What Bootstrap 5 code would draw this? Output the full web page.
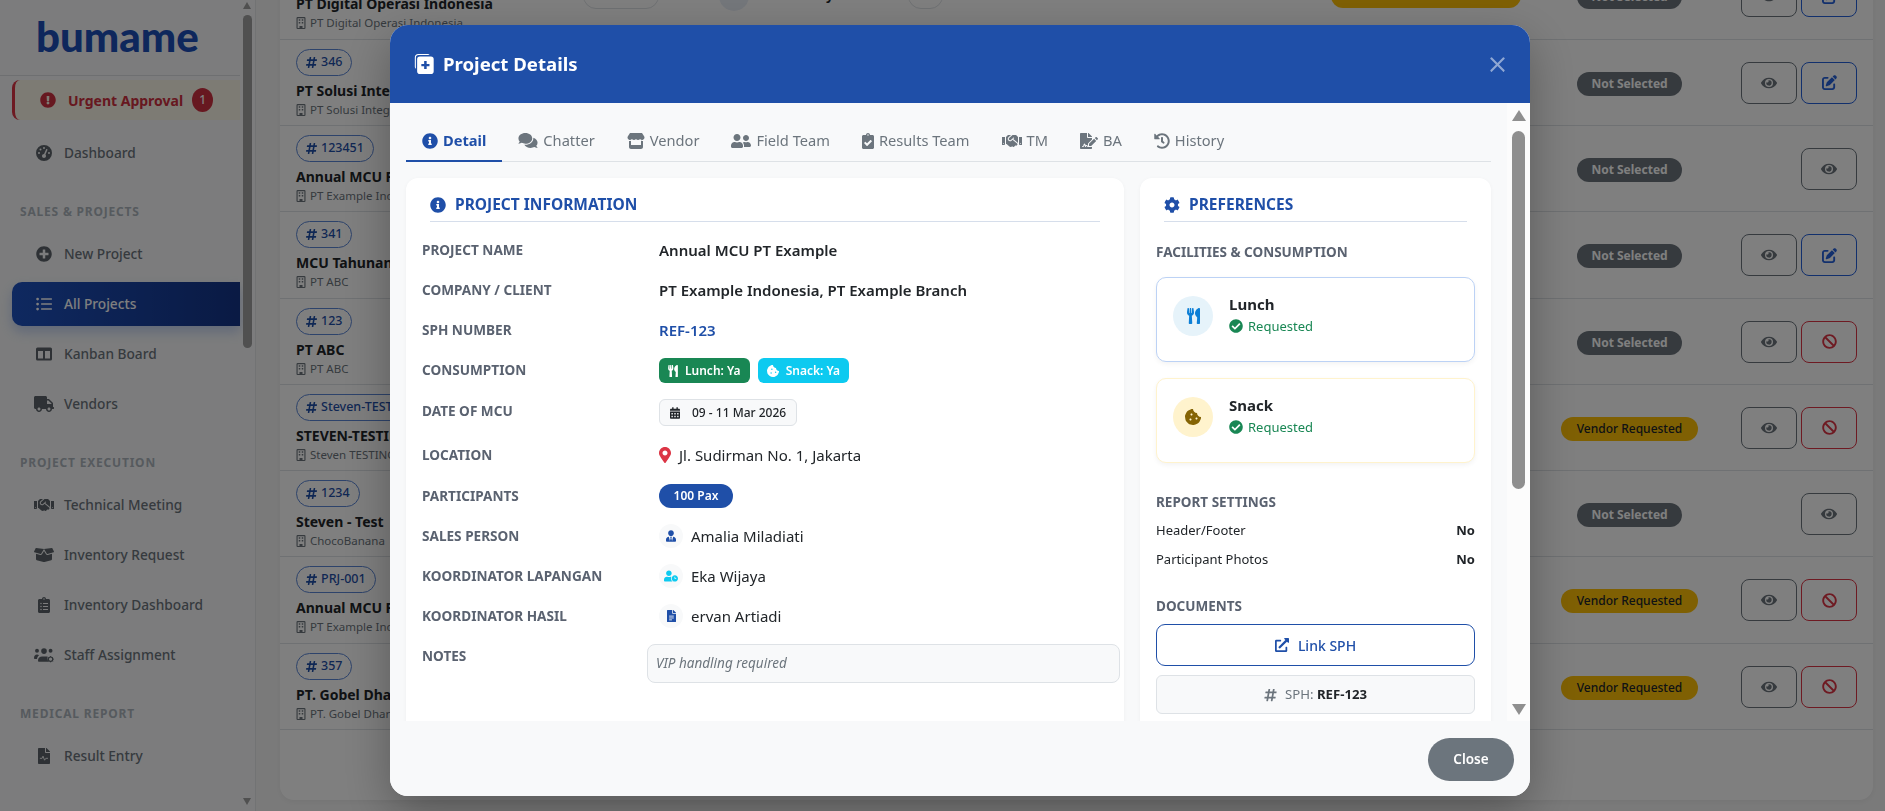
<!DOCTYPE html>
<html lang="en">
<head>
    <meta charset="UTF-8">
    <meta name="viewport" content="width=device-width, initial-scale=1.0">
    <title>All Projects</title>
    <link rel="stylesheet" href="https://cdn.jsdelivr.net/npm/bootstrap@5.3.0/dist/css/bootstrap.min.css">
    <style>
        :root { --blue: #1f4fa8; --side-text: #6c757d; }
        html, body { height: 100%; overflow: hidden; }
        body { font-family: "Noto Sans", "Liberation Sans", sans-serif; background: #f5f5f5; color: #212529; font-size: 15px; }
        svg.ic { fill: currentColor; display: block; flex: none; }

        /* sidebar */
        .side-wrap { width: 256px; flex: none; background: #f8f9fa; border-right: 1px solid #e4e6e8; }
        .side-col { width: 240px; flex: none; }
        .brand-box { height: 76px; border-bottom: 1px solid #dcdfe3; padding: 10px 0 0 36px; }
        .brand-word { font-family: Lato, Inter, sans-serif; font-weight: 900; font-size: 42px; line-height: 52px; color: #1c4fb8; }
        .urgent-item { height: 40px; margin: 4px 0 11px 12px; padding-left: 25px; border-left: 3px solid #dc3545; border-radius: 8px 0 0 8px; background: #faf6e8; color: #cf3040; font-weight: 700; font-size: 14px; gap: 12px; }
        .urgent-count { width: 21px; height: 24px; border-radius: 50%; background: #cf3040; color: #fff; font-size: 12px; font-weight: 500; margin-left: -3px; }
        .side-item { height: 44px; margin: 0 0 6px 12px; padding-left: 20px; gap: 8px; color: var(--side-text); font-weight: 500; font-size: 13.7px; text-decoration: none; }
        .side-item.on { background: linear-gradient(90deg, #1e52c0, #143488); color: #fff; border-radius: 10px 0 0 10px; box-shadow: 0 6px 12px rgba(36, 96, 218, .25); }
        .side-ico { width: 24px; display: flex; justify-content: center; color: #5c636a; }
        .on .side-ico { color: #fff; }
        .side-head { height: 18px; line-height: 18px; margin: 28px 0 11px 20px; font-size: 12px; font-weight: 700; letter-spacing: .8px; color: #adb5bd; text-transform: uppercase; }
        .side-rail { width: 15px; padding-left: 3px; }
        .rail-up { width: 0; height: 0; border-left: 4.5px solid transparent; border-right: 4.5px solid transparent; border-bottom: 7px solid #a0a0a0; margin: 2px 0 6px; }
        .rail-thumb { width: 9px; height: 333px; border-radius: 5px; background: #a0a0a0; }
        .rail-down { width: 0; height: 0; border-left: 4.5px solid transparent; border-right: 4.5px solid transparent; border-top: 7px solid #a0a0a0; margin-top: 450px; }

        /* page table */
        .page-pane { padding-left: 24px; padding-right: 12px; }
        .table-box { margin-top: -47px; height: 847px; background: #fff; border-radius: 14px; box-shadow: 0 2px 6px rgba(0, 0, 0, .05); overflow: hidden; }
        .job-table { table-layout: fixed; width: 1593px; }
        .job-table td { padding: 0; height: 86.25px; border-bottom: 1px solid #dee2e6; vertical-align: middle; background: transparent; }
        .job-table td.first { vertical-align: top; padding: 9px 0 0 16px; }
        .id-pill { height: 27px; padding: 0 9px; gap: 4px; border: 1px solid #5b86d6; border-radius: 14px; color: var(--blue); font-size: 12.5px; font-weight: 500; }
        .job-name { font-weight: 700; font-size: 14px; line-height: 20px; margin-top: 5px; white-space: nowrap; }
        .job-sub { font-size: 11.5px; line-height: 16px; margin-top: 1px; gap: 4px; color: #6c757d; white-space: nowrap; }
        .state-pill { height: 24px; border-radius: 12px; font-size: 12px; font-weight: 700; margin-top: 3px; }
        .state-none { width: 105px; background: #6c757d; color: #fff; }
        .state-vendor { width: 137px; background: #ffc107; color: #212529; font-weight: 500; }
        .state-manager { width: 190px; background: #ffc107; color: #212529; font-size: 11.5px; margin-top: 0; }
        .act-btn { width: 56px; height: 42px; margin-top: 1px; border: 1px solid #6c757d; border-radius: 8px; background: none; color: #6c757d; padding: 0; display: flex; align-items: center; justify-content: center; }
        .act-edit { border-color: #2460da; color: #2460da; }
        .act-stop { border-color: #dc3545; color: #dc3545; }
        .top-chip { height: 26px; border: 1px solid #dee2e6; border-radius: 13px; font-size: 12px; font-weight: 600; gap: 4px; }
        .top-avatar { width: 30px; height: 30px; border-radius: 50%; background: #e9eef7; }

        /* modal */
        .detail-dialog { max-width: none; width: 1140px; height: 771px; margin: 25px 0 0 390px; }
        .detail-content { height: 771px; border: 0; border-radius: 18px; overflow: hidden; background: #f8f9fa; box-shadow: 0 16px 48px rgba(0, 0, 0, .3); }
        .detail-head { height: 78px; flex: none; background: var(--blue); color: #fff; padding: 0 24px; border: 0; border-radius: 0; }
        .detail-title { font-size: 18.6px; font-weight: 700; gap: 9px; line-height: 24px; margin-top: -1px; }
        .detail-head .btn-close { margin: 0 0 0 auto; padding: 0; width: 17px; height: 17px; background-size: 17px; }
        .detail-body { padding: 0; overflow: hidden; min-height: 0; }
        .detail-main { padding: 16px; min-width: 0; }
        .modal-rail { width: 23px; flex: none; background: #fcfcfc; padding: 7px 0 0 5px; }
        .mr-up { width: 0; height: 0; border-left: 7px solid transparent; border-right: 7px solid transparent; border-bottom: 11px solid #8f8f8f; }
        .mr-thumb { width: 13px; height: 358px; border-radius: 7px; background: #8f8f8f; margin-top: 10px; }
        .mr-down { width: 0; height: 0; border-left: 7px solid transparent; border-right: 7px solid transparent; border-top: 11px solid #8f8f8f; margin-top: 215px; }

        .info-tabs { border-bottom: 1px solid #dee2e6; flex-wrap: nowrap; }
        .info-tabs .nav-link { padding: 10px 16px 8px; line-height: 23px; font-size: 14.65px; color: #6c757d; border: 0; border-bottom: 2px solid transparent; background: none; margin-bottom: -1px; gap: 5px; border-radius: 0; }
        .info-tabs .nav-link.active { color: var(--blue); font-weight: 700; border-bottom-color: var(--blue); background: none; }

        .sheet { background: #fff; border-radius: 12px; box-shadow: 0 1px 4px rgba(0, 0, 0, .04); height: 600px; }
        .sheet-left { padding: 15px 3px 0 4px; }
        .sheet-right { padding: 15px 16px 0; }
        .sheet-head { height: 29px; border-bottom: 1px solid #d6deeb; color: var(--blue); font-size: 15.5px; font-weight: 700; gap: 9px; padding-bottom: 5px; text-transform: uppercase; }
        .sheet-left .sheet-head { margin: 0 21px 16px 20px; }
        .sheet-right .sheet-head { margin: 0 8px 20px; }
        .field-row { display: flex; margin-bottom: 16px; }
        .field-row.tall { margin-bottom: 17px; }
        .field-label { width: 237px; flex: none; padding: 1px 0 0 12px; font-size: 13.6px; line-height: 21px; font-weight: 700; color: #5a6270; text-transform: uppercase; }
        .field-value { flex: 1; padding-left: 12px; font-size: 15px; line-height: 24px; min-width: 0; }
        .strong-val { font-weight: 600; }
        .blue-val { color: var(--blue); }
        .chip { height: 25px; border-radius: 6px; padding: 0 9px; font-size: 12px; font-weight: 600; color: #fff; gap: 7px; }
        .chip-snack { background: #0dcaf0; }
        .date-chip { height: 27px; border: 1px solid #dee2e6; border-radius: 6px; background: #f8f9fa; padding: 0 10px; font-size: 12px; font-weight: 500; gap: 12px; }
        .pax-pill { width: 74px; height: 24px; border-radius: 12px; background: var(--blue); color: #fff; font-size: 12px; font-weight: 600; }
        .who-ico { width: 24px; height: 24px; border-radius: 50%; background: #f8f9fa; margin-right: 8px; color: var(--blue); }
        .who-cyan { color: #0dcaf0; }
        .note-box { width: 473px; height: 39px; border: 1px solid #dee2e6; border-radius: 8px; background: #f8f9fa; padding-left: 8px; font-size: 13.5px; font-style: italic; color: #6c757d; display: flex; align-items: center; }
        .sub-head { font-size: 13.5px; font-weight: 700; line-height: 20px; color: #5a6270; text-transform: uppercase; }
        .sub-docs { margin-top: 27px; }
        .pref-box { height: 85px; border-radius: 10px; background: #fff; padding: 18px 16px; gap: 16px; box-shadow: 0 2px 5px rgba(0, 0, 0, .05); }
        .pref-blue { border: 1px solid #bcd2f5; margin: 15px 0 16px; }
        .pref-yellow { border: 1px solid #fff3cd; margin-bottom: 29px; }
        .pref-round { width: 40px; height: 40px; border-radius: 50%; flex: none; }
        .round-blue { background: #e6f3fa; color: #0d7fd6; }
        .round-yellow { background: #fff3cd; color: #856404; }
        .pref-name { font-size: 15px; font-weight: 700; line-height: 22px; margin-top: -3px; }
        .pref-state { font-size: 13px; line-height: 20px; color: #198754; gap: 5px; margin-top: 1px; }
        .set-row { font-size: 13px; line-height: 20px; margin-top: 9px; }
        .set-row.first { margin-top: 8px; }
        .doc-link { height: 42px; border: 1.5px solid var(--blue); border-radius: 9px; color: var(--blue); font-size: 14px; font-weight: 500; margin-top: 8px; gap: 9px; background: #fff; }
        .doc-code { height: 39px; border: 1px solid #dee2e6; border-radius: 6px; background: #f8f9fa; font-size: 13.2px; margin-top: 9px; gap: 8px; color: #6c757d; }
        .doc-code b { color: #212529; }
        .detail-foot { height: 75px; flex: none; background: #f8f9fa; padding: 0 16px 0 0; border: 0; border-radius: 0; justify-content: flex-end; align-items: flex-start; }
        .close-pill { width: 86px; height: 43px; margin: 17px 0 0; border-radius: 22px; border: 0; background: #6c757d; color: #fff; font-size: 13.5px; font-weight: 600; padding: 0; }
    </style>
</head>
<body class="d-flex">
    <svg width="0" height="0" class="position-absolute">
        <symbol id="i-info" viewBox="0 0 512 512"><path d="M256 8C119.043 8 8 119.083 8 256c0 136.997 111.043 248 248 248s248-111.003 248-248C504 119.083 392.957 8 256 8zm0 110c23.196 0 42 18.804 42 42s-18.804 42-42 42-42-18.804-42-42 18.804-42 42-42zm56 254c0 6.627-5.373 12-12 12h-88c-6.627 0-12-5.373-12-12v-24c0-6.627 5.373-12 12-12h12v-64h-12c-6.627 0-12-5.373-12-12v-24c0-6.627 5.373-12 12-12h64c6.627 0 12 5.373 12 12v100h12c6.627 0 12 5.373 12 12v24z"/></symbol>
        <symbol id="i-check" viewBox="0 0 512 512"><path d="M504 256c0 136.967-111.033 248-248 248S8 392.967 8 256 119.033 8 256 8s248 111.033 248 248zM227.314 387.314l184-184c6.248-6.248 6.248-16.379 0-22.627l-22.627-22.627c-6.248-6.249-16.379-6.249-22.628 0L216 308.118l-70.059-70.059c-6.248-6.248-16.379-6.248-22.628 0l-22.627 22.627c-6.248 6.248-6.248 16.379 0 22.627l104 104c6.249 6.249 16.379 6.249 22.628.001z"/></symbol>
        <symbol id="i-plus" viewBox="0 0 512 512"><path d="M256 8C119 8 8 119 8 256s111 248 248 248 248-111 248-248S393 8 256 8zm144 276c0 6.6-5.4 12-12 12h-92v92c0 6.6-5.4 12-12 12h-56c-6.6 0-12-5.4-12-12v-92h-92c-6.6 0-12-5.4-12-12v-56c0-6.6 5.4-12 12-12h92v-92c0-6.6 5.4-12 12-12h56c6.6 0 12 5.4 12 12v92h92c6.6 0 12 5.4 12 12v56z"/></symbol>
        <symbol id="i-alert" viewBox="0 0 512 512"><path d="M504 256c0 136.997-111.043 248-248 248S8 392.997 8 256C8 119.083 119.043 8 256 8s248 111.083 248 248zm-248 50c-25.405 0-46 20.595-46 46s20.595 46 46 46 46-20.595 46-46-20.595-46-46-46zm-43.673-165.346l7.418 136c.347 6.364 5.609 11.346 11.982 11.346h48.546c6.373 0 11.635-4.982 11.982-11.346l7.418-136c.375-6.874-5.098-12.654-11.982-12.654h-63.383c-6.884 0-12.356 5.78-11.981 12.654z"/></symbol>
        <symbol id="i-eye" viewBox="0 0 576 512"><path d="M572.52 241.4C518.29 135.59 410.93 64 288 64S57.68 135.64 3.48 241.41a32.35 32.35 0 0 0 0 29.19C57.71 376.41 165.07 448 288 448s230.32-71.64 284.52-177.41a32.35 32.35 0 0 0 0-29.19zM288 400a144 144 0 1 1 144-144 143.93 143.93 0 0 1-144 144zm0-240a95.31 95.31 0 0 0-25.31 3.79 47.85 47.85 0 0 1-66.9 66.9A95.78 95.78 0 1 0 288 160z"/></symbol>
        <symbol id="i-ban" viewBox="0 0 512 512"><path d="M256 8C119.034 8 8 119.033 8 256s111.034 248 248 248 248-111.034 248-248S392.967 8 256 8zm130.108 117.892c65.448 65.448 70 165.481 20.677 235.637L150.47 105.216c70.204-49.356 170.226-44.735 235.638 20.676zM125.892 386.108c-65.448-65.448-70-165.481-20.677-235.637L361.53 406.784c-70.203 49.356-170.226 44.736-235.638-20.676z"/></symbol>
        <symbol id="i-edit" viewBox="0 0 512 512"><path d="M471.6 21.7c-21.9-21.9-57.3-21.9-79.2 0L362.3 51.7l97.9 97.9 30.1-30.1c21.9-21.9 21.9-57.3 0-79.2L471.6 21.7zm-299.2 220c-6.1 6.1-10.8 13.6-13.5 21.9l-29.6 88.8c-2.9 8.6-.6 18.1 5.8 24.6s15.9 8.7 24.6 5.8l88.8-29.6c8.2-2.7 15.7-7.4 21.9-13.5L437.7 172.3 339.7 74.3 172.4 241.7zM96 64C43 64 0 107 0 160V416c0 53 43 96 96 96H352c53 0 96-43 96-96V320c0-17.7-14.3-32-32-32s-32 14.3-32 32v96c0 17.7-14.3 32-32 32H96c-17.7 0-32-14.3-32-32V160c0-17.7 14.3-32 32-32h96c17.7 0 32-14.3 32-32s-14.3-32-32-32H96z"/></symbol>
        <symbol id="i-food" viewBox="0 0 416 512"><path d="M207.9 15.2c.8 4.7 16.1 94.5 16.1 128.8 0 52.3-27.8 89.6-68.9 104.6L168 486.7c.7 13.7-10.2 25.3-24 25.3H80c-13.7 0-24.7-11.5-24-25.3l12.9-238.1C27.7 233.6 0 196.2 0 144 0 109.6 15.3 19.9 16.1 15.2 19.3-5.1 61.4-5.4 64 16.3v141.2c1.3 3.4 15.1 3.2 16 0 1.4-25.3 7.9-139.2 8-141.8 3.3-20.8 44.7-20.8 47.9 0 .2 2.7 6.6 116.5 8 141.8.9 3.2 14.8 3.4 16 0V16.3c2.6-21.6 44.8-21.4 48-1.1zm119.2 285.7l-15 185.1c-1.2 14 9.9 26 23.9 26h56c13.3 0 24-10.7 24-24V24c0-13.2-10.7-24-24-24-82.5 0-221.4 178.5-64.9 300.9z"/></symbol>
        <symbol id="i-history" viewBox="0 0 512 512"><path d="M504 255.531c.253 136.64-111.18 248.372-247.82 248.468-59.015.042-113.223-20.53-155.822-54.911-11.077-8.94-11.905-25.541-1.839-35.607l11.267-11.267c8.609-8.609 22.353-9.551 31.891-1.984C173.062 425.135 212.781 440 256 440c101.705 0 184-82.311 184-184 0-101.705-82.311-184-184-184-48.814 0-93.149 18.969-126.068 49.932l50.754 50.754c10.08 10.08 2.941 27.314-11.313 27.314H24c-8.837 0-16-7.163-16-16V38.627c0-14.254 17.234-21.393 27.314-11.314l49.372 49.372C129.209 34.136 189.552 8 256 8c136.81 0 247.747 110.78 248 247.531zm-180.912 78.784l9.823-12.63c8.138-10.463 6.253-25.542-4.21-33.679L288 256.349V152c0-13.255-10.745-24-24-24h-16c-13.255 0-24 10.745-24 24v135.651l65.409 50.874c10.463 8.137 25.541 6.253 33.679-4.21z"/></symbol>
        <symbol id="i-gear" viewBox="0 0 512 512"><path d="M487.4 315.7l-42.6-24.6c4.3-23.2 4.3-47 0-70.2l42.6-24.6c4.9-2.8 7.1-8.6 5.5-14-11.1-35.6-30-67.8-54.7-94.6-3.8-4.1-10-5.1-14.8-2.3L380.8 110c-17.9-15.4-38.5-27.3-60.8-35.1V25.8c0-5.6-3.9-10.5-9.4-11.7-36.7-8.2-74.3-7.8-109.2 0-5.5 1.2-9.4 6.1-9.4 11.7V75c-22.2 7.9-42.8 19.8-60.8 35.1L88.7 85.5c-4.9-2.8-11-1.9-14.8 2.3-24.7 26.7-43.6 58.9-54.7 94.6-1.7 5.4.6 11.2 5.5 14L67.3 221c-4.3 23.2-4.3 47 0 70.2l-42.6 24.6c-4.9 2.8-7.1 8.6-5.5 14 11.1 35.6 30 67.8 54.7 94.6 3.8 4.1 10 5.1 14.8 2.3l42.6-24.6c17.9 15.4 38.5 27.3 60.8 35.1v49.2c0 5.6 3.9 10.5 9.4 11.7 36.7 8.2 74.3 7.8 109.2 0 5.5-1.2 9.4-6.1 9.4-11.7v-49.2c22.2-7.9 42.8-19.8 60.8-35.1l42.6 24.6c4.9 2.8 11 1.9 14.8-2.3 24.7-26.7 43.6-58.9 54.7-94.6 1.5-5.5-.7-11.3-5.6-14.1zM256 336c-44.1 0-80-35.9-80-80s35.9-80 80-80 80 35.9 80 80-35.9 80-80 80z"/></symbol>
        <symbol id="i-comments" viewBox="0 0 576 512"><path d="M416 192c0-88.4-93.1-160-208-160S0 103.6 0 192c0 34.3 14.1 65.9 38 92-13.4 30.2-35.5 54.2-35.8 54.5-2.2 2.3-2.8 5.7-1.5 8.7S4.8 352 8 352c36.6 0 66.9-12.3 88.7-25 32.2 15.7 70.3 25 111.3 25 114.9 0 208-71.6 208-160zm122 220c23.9-26 38-57.7 38-92 0-66.9-53.5-124.2-129.3-148.1.9 6.6 1.3 13.3 1.3 20.1 0 105.9-107.7 192-240 192-10.8 0-21.3-.8-31.7-1.9C207.8 439.6 281.8 480 368 480c41 0 79.1-9.2 111.3-25 21.8 12.7 52.1 25 88.7 25 3.2 0 6.1-1.9 7.3-4.8 1.3-2.9.7-6.3-1.5-8.7-.3-.3-22.4-24.2-35.8-54.5z"/></symbol>
        <symbol id="i-friends" viewBox="0 0 640 512"><path d="M192 256c61.9 0 112-50.1 112-112S253.9 32 192 32 80 82.1 80 144s50.1 112 112 112zm76.8 32h-8.3c-20.8 10-43.9 16-68.5 16s-47.6-6-68.5-16h-8.3C51.6 288 0 339.6 0 403.2V432c0 26.5 21.5 48 48 48h288c26.5 0 48-21.5 48-48v-28.8c0-63.6-51.6-115.2-115.2-115.2zM480 256c53 0 96-43 96-96s-43-96-96-96-96 43-96 96 43 96 96 96zm48 32h-3.8c-13.9 4.8-28.6 8-44.2 8s-30.3-3.2-44.2-8H432c-20.4 0-39.2 5.9-55.7 15.4 24.4 26.3 39.7 61.2 39.7 99.8v38.4c0 2.2-.5 4.3-.6 6.4H592c26.5 0 48-21.5 48-48 0-61.9-50.1-112-112-112z"/></symbol>
        <symbol id="i-clipcheck" viewBox="0 0 384 512"><path d="M336 64h-80c0-35.3-28.7-64-64-64s-64 28.7-64 64H48C21.5 64 0 85.5 0 112v352c0 26.5 21.5 48 48 48h288c26.5 0 48-21.5 48-48V112c0-26.5-21.5-48-48-48zM192 40c13.3 0 24 10.7 24 24s-10.7 24-24 24-24-10.7-24-24 10.7-24 24-24zm121.2 231.8l-143 141.8c-4.7 4.7-12.3 4.6-17-.1l-82.6-83.3c-4.7-4.7-4.6-12.3.1-17L99.1 285c4.7-4.7 12.3-4.6 17 .1l46 46.4 106-105.2c4.7-4.7 12.3-4.6 17 .1l28.2 28.4c4.7 4.8 4.6 12.3-.1 17z"/></symbol>
        <symbol id="i-cliplist" viewBox="0 0 384 512"><path d="M336 64h-80c0-35.3-28.7-64-64-64s-64 28.7-64 64H48C21.5 64 0 85.5 0 112v352c0 26.5 21.5 48 48 48h288c26.5 0 48-21.5 48-48V112c0-26.5-21.5-48-48-48zM96 424c-13.3 0-24-10.7-24-24s10.7-24 24-24 24 10.7 24 24-10.7 24-24 24zm0-96c-13.3 0-24-10.7-24-24s10.7-24 24-24 24 10.7 24 24-10.7 24-24 24zm0-96c-13.3 0-24-10.7-24-24s10.7-24 24-24 24 10.7 24 24-10.7 24-24 24zm96-192c13.3 0 24 10.7 24 24s-10.7 24-24 24-24-10.7-24-24 10.7-24 24-24zm128 368c0 4.4-3.6 8-8 8H168c-4.4 0-8-3.6-8-8v-16c0-4.4 3.6-8 8-8h144c4.4 0 8 3.6 8 8v16zm0-96c0 4.4-3.6 8-8 8H168c-4.4 0-8-3.6-8-8v-16c0-4.4 3.6-8 8-8h144c4.4 0 8 3.6 8 8v16zm0-96c0 4.4-3.6 8-8 8H168c-4.4 0-8-3.6-8-8v-16c0-4.4 3.6-8 8-8h144c4.4 0 8 3.6 8 8v16z"/></symbol>
        <symbol id="i-pin" viewBox="0 0 384 512"><path d="M172.268 501.67C26.97 291.031 0 256.409 0 192.001 0 85.961 85.961 0 192 0s192 85.961 192 192c0 64.408-26.97 99.03-172.268 309.67-9.535 13.774-29.93 13.773-39.464 0zM192 272c44.183 0 80-35.817 80-80s-35.817-80-80-80-80 35.817-80 80 35.817 80 80 80z"/></symbol>
        <symbol id="i-cal" viewBox="0 0 448 512"><path d="M0 464c0 26.5 21.5 48 48 48h352c26.5 0 48-21.5 48-48V192H0v272zm320-196c0-6.6 5.4-12 12-12h40c6.6 0 12 5.4 12 12v40c0 6.6-5.4 12-12 12h-40c-6.6 0-12-5.4-12-12v-40zm0 128c0-6.6 5.4-12 12-12h40c6.6 0 12 5.4 12 12v40c0 6.6-5.4 12-12 12h-40c-6.6 0-12-5.4-12-12v-40zM192 268c0-6.6 5.4-12 12-12h40c6.6 0 12 5.4 12 12v40c0 6.6-5.4 12-12 12h-40c-6.6 0-12-5.4-12-12v-40zm0 128c0-6.6 5.4-12 12-12h40c6.6 0 12 5.4 12 12v40c0 6.6-5.4 12-12 12h-40c-6.6 0-12-5.4-12-12v-40zM64 268c0-6.6 5.4-12 12-12h40c6.6 0 12 5.4 12 12v40c0 6.6-5.4 12-12 12H76c-6.6 0-12-5.4-12-12v-40zm0 128c0-6.6 5.4-12 12-12h40c6.6 0 12 5.4 12 12v40c0 6.6-5.4 12-12 12H76c-6.6 0-12-5.4-12-12v-40zM400 64h-48V16c0-8.8-7.2-16-16-16h-32c-8.8 0-16 7.2-16 16v48H160V16c0-8.8-7.2-16-16-16h-32c-8.8 0-16 7.2-16 16v48H48C21.5 64 0 85.5 0 112v48h448v-48c0-26.5-21.5-48-48-48z"/></symbol>
        <symbol id="i-hash" viewBox="0 0 448 512"><path d="M440.667 182.109l7.143-40c1.313-7.355-4.342-14.109-11.813-14.109h-74.81l14.623-81.891C377.123 38.754 371.468 32 363.997 32h-40.632a12 12 0 0 0-11.813 9.891L296.175 128H197.54l14.623-81.891C213.477 38.754 207.822 32 200.35 32h-40.632a12 12 0 0 0-11.813 9.891L132.528 128H53.432a12 12 0 0 0-11.813 9.891l-7.143 40C33.163 185.246 38.818 192 46.289 192h74.81L98.242 320H19.146a12 12 0 0 0-11.813 9.891l-7.143 40C-1.123 377.246 4.532 384 12.003 384h74.81L72.19 465.891C70.877 473.246 76.532 480 84.003 480h40.632a12 12 0 0 0 11.813-9.891L151.826 384h98.634l-14.623 81.891C234.523 473.246 240.178 480 247.65 480h40.632a12 12 0 0 0 11.813-9.891L315.472 384h79.096a12 12 0 0 0 11.813-9.891l7.143-40c1.313-7.355-4.342-14.109-11.813-14.109h-74.81l22.857-128h79.096a12 12 0 0 0 11.813-9.891zM261.889 320h-98.634l22.857-128h98.634l-22.857 128z"/></symbol>
        <symbol id="i-extern" viewBox="0 0 512 512"><path d="M432,320H400a16,16,0,0,0-16,16V448H64V128H208a16,16,0,0,0,16-16V80a16,16,0,0,0-16-16H48A48,48,0,0,0,0,112V464a48,48,0,0,0,48,48H400a48,48,0,0,0,48-48V336A16,16,0,0,0,432,320ZM488,0h-128c-21.37,0-32.05,25.91-17,41l35.73,35.73L135,320.37a24,24,0,0,0,0,34L157.67,377a24,24,0,0,0,34,0L435.28,133.32,471,169c15,15,41,4.5,41-17V24A24,24,0,0,0,488,0Z"/></symbol>
        <symbol id="i-store" viewBox="0 0 576 512"><path d="M547.6 103.8L490.3 13.1C485.2 5 476.1 0 466.4 0H109.6C99.9 0 90.8 5 85.7 13.1L28.3 103.8c-29.6 46.8-3.4 111.9 51.9 119.4c4 .5 8.1 .8 12.1 .8c26.1 0 49.3-11.4 65.2-29c15.9 17.6 39.1 29 65.2 29c26.1 0 49.3-11.4 65.2-29c15.9 17.6 39.1 29 65.2 29c26.2 0 49.3-11.4 65.2-29c16 17.6 39.1 29 65.2 29c4.1 0 8.1-.3 12.1-.8c55.5-7.4 81.8-72.5 52.1-119.4zM499.7 254.9l-.1 0c-5.3 .7-10.7 1.1-16.2 1.1c-12.4 0-24.3-1.9-35.4-5.3V384H128V250.6c-11.2 3.5-23.2 5.4-35.6 5.4c-5.5 0-11-.4-16.3-1.1l-.1 0c-4.1-.6-8.1-1.3-12-2.3V384v64c0 35.3 28.7 64 64 64H448c35.3 0 64-28.7 64-64V384 252.6c-4 1-8 1.8-12.3 2.3z"/></symbol>
        <symbol id="i-shake" viewBox="0 0 640 512"><path d="M434.7 64h-85.9c-8 0-15.7 3-21.6 8.4l-98.3 90c-.1.1-.2.3-.3.4-16.6 15.6-16.3 40.5-2.1 56 12.7 13.9 39.4 17.6 56.1 2.7.1-.1.3-.1.4-.2l79.9-73.2c6.5-5.9 16.7-5.5 22.6 1 6 6.5 5.5 16.6-1 22.6l-26.1 23.9L504 313.8c2.9 2.4 5.5 5 7.9 7.7V128l-54.6-54.6c-5.9-6-14.1-9.4-22.6-9.4zM544 128.2v223.9c0 17.7 14.3 32 32 32h64V128.2h-96zm48 223.9c-8.8 0-16-7.2-16-16s7.2-16 16-16 16 7.2 16 16-7.2 16-16 16zM0 384h64c17.7 0 32-14.3 32-32V128.2H0V384zm48-63.9c8.8 0 16 7.2 16 16s-7.2 16-16 16-16-7.2-16-16c0-8.9 7.2-16 16-16zm435.9 18.6L334.6 217.5l-30 27.5c-29.7 27.1-75.2 24.5-101.7-4.4-26.9-29.4-24.8-74.9 4.4-101.7L289.1 64h-83.8c-8.5 0-16.6 3.4-22.6 9.4L128 128v223.9h18.3l90.5 81.9c27.4 22.3 67.7 18.1 90-9.3l.2-.2 17.9 15.5c15.9 13 39.4 10.5 52.3-5.4l31.4-38.6 5.4 4.4c13.7 11.1 33.9 9.1 45-4.7l9.5-11.7c11.2-13.8 9.1-33.9-4.6-45.1z"/></symbol>
        <symbol id="i-sign" viewBox="0 0 576 512"><path d="M218.17 424.14c-2.95-5.92-8.09-6.52-10.17-6.52s-7.22.59-10.02 6.19l-7.67 15.34c-6.37 12.78-25.03 11.37-29.48-2.09L144 386.59l-10.61 31.88c-5.89 17.66-22.38 29.53-41 29.53H80c-8.84 0-16-7.16-16-16s7.16-16 16-16h12.39c4.83 0 9.11-3.08 10.64-7.66l18.19-54.64c3.3-9.81 12.44-16.41 22.78-16.41s19.48 6.59 22.77 16.41l13.88 41.64c19.75-16.19 54.06-9.7 66 14.16 1.89 3.78 5.49 5.95 9.36 6.26v-82.12l128-127.09V160H248c-13.2 0-24-10.8-24-24V0H24C10.7 0 0 10.7 0 24v464c0 13.3 10.7 24 24 24h336c13.3 0 24-10.7 24-24v-40l-128-.11c-16.12-.31-30.58-9.28-37.83-23.75zM384 121.9c0-6.3-2.5-12.4-7-16.9L279.1 7c-4.5-4.5-10.6-7-17-7H256v128h128v-6.1zm-96 225.06V416h68.99l161.68-162.78-67.88-67.88L288 346.96zm280.54-179.63l-31.87-31.87c-9.94-9.94-26.07-9.94-36.01 0l-27.25 27.25 67.88 67.88 27.25-27.25c9.95-9.94 9.95-26.07 0-36.01z"/></symbol>
        <symbol id="i-gauge" viewBox="0 0 512 512"><path d="M0 256a256 256 0 1 1 512 0A256 256 0 1 1 0 256zM288 96a32 32 0 1 0 -64 0 32 32 0 1 0 64 0zM256 416c35.3 0 64-28.7 64-64c0-17.4-6.9-33.1-18.1-44.6L366 161.7c5.3-12.1-.2-26.3-12.3-31.6s-26.3 .2-31.6 12.3L257.9 288c-.6 0-1.3 0-1.9 0c-35.3 0-64 28.7-64 64s28.7 64 64 64zM176 144a32 32 0 1 0 -64 0 32 32 0 1 0 64 0zM96 288a32 32 0 1 0 0-64 32 32 0 1 0 0 64zm352-32a32 32 0 1 0 -64 0 32 32 0 1 0 64 0z"/></symbol>
        <symbol id="i-truck" viewBox="0 0 640 512"><path d="M624 352h-16V243.9c0-12.7-5.1-24.9-14.1-33.9L494 110.1c-9-9-21.2-14.1-33.9-14.1H416V48c0-26.5-21.5-48-48-48H48C21.5 0 0 21.5 0 48v320c0 26.5 21.5 48 48 48h16c0 53 43 96 96 96s96-43 96-96h128c0 53 43 96 96 96s96-43 96-96h48c8.8 0 16-7.2 16-16v-32c0-8.8-7.2-16-16-16zM160 464c-26.5 0-48-21.5-48-48s21.5-48 48-48 48 21.5 48 48-21.5 48-48 48zm320 0c-26.5 0-48-21.5-48-48s21.5-48 48-48 48 21.5 48 48-21.5 48-48 48zm80-208H416V144h44.1l99.9 99.9V256z"/></symbol>
        <symbol id="i-box" viewBox="0 0 640 512"><path d="M425.7 256c-16.9 0-32.8-9-41.4-23.4L320 126l-64.2 106.6c-8.7 14.5-24.6 23.5-41.5 23.5-4.5 0-9-.6-13.3-1.9L64 215v178c0 14.7 10 27.5 24.2 31l216.2 54.1c10.2 2.5 20.9 2.5 31 0L551.8 424c14.2-3.6 24.2-16.4 24.2-31V215l-137 39.1c-4.3 1.3-8.8 1.9-13.3 1.9zm212.6-112.2L586.8 41c-3.1-6.2-9.8-9.8-16.7-8.9L320 64l91.7 152.1c3.8 6.3 11.4 9.3 18.5 7.3l197.9-56.5c9.9-2.9 14.7-13.9 10.2-23.1zM53.2 41L1.7 143.8c-4.6 9.2.3 20.2 10.1 23l197.9 56.5c7.1 2 14.7-1 18.5-7.3L320 64 69.8 32.1c-6.9-.8-13.5 2.7-16.6 8.9z"/></symbol>
        <symbol id="i-tie" viewBox="0 0 448 512"><path d="M224 256c70.7 0 128-57.3 128-128S294.7 0 224 0 96 57.3 96 128s57.3 128 128 128zm95.8 32.6L272 480l-32-136 32-56h-96l32 56-32 136-47.8-191.4C56.9 292 0 350.3 0 422.4V464c0 26.5 21.5 48 48 48h352c26.5 0 48-21.5 48-48v-41.6c0-72.1-56.9-130.4-128.2-133.8z"/></symbol>
        <symbol id="i-userclock" viewBox="0 0 640 512"><path d="M496 224c-79.6 0-144 64.4-144 144s64.4 144 144 144 144-64.4 144-144-64.4-144-144-144zm64 150.3c0 5.3-4.4 9.7-9.7 9.7h-60.6c-5.3 0-9.7-4.4-9.7-9.7v-76.6c0-5.3 4.4-9.7 9.7-9.7h12.6c5.3 0 9.7 4.4 9.7 9.7V352h38.3c5.3 0 9.7 4.4 9.7 9.7v12.6zM320 368c0-27.8 6.7-54.1 18.2-77.5-8-1.5-16.2-2.5-24.6-2.5h-16.7c-22.2 10.2-46.9 16-72.9 16s-50.6-5.8-72.9-16h-16.7C60.2 288 0 348.2 0 422.4V464c0 26.5 21.5 48 48 48h347.1c-45.3-31.9-75.1-84.5-75.1-144zm-96-112c70.7 0 128-57.3 128-128S294.7 0 224 0 96 57.3 96 128s57.3 128 128 128z"/></symbol>
        <symbol id="i-cookie" viewBox="0 0 512 512"><path d="M510.52 255.82c-69.97-.85-126.47-57.69-126.47-127.86-70.17 0-127-56.49-127.86-126.45-27.26-4.14-55.13.3-79.72 12.82l-69.13 35.22a132.221 132.221 0 0 0-57.79 57.81l-35.1 68.88a132.645 132.645 0 0 0-12.82 80.95l12.08 76.27a132.521 132.521 0 0 0 37.16 72.96l54.77 54.76a132.036 132.036 0 0 0 72.71 37.06l76.71 12.15c27.51 4.36 55.7-.11 80.53-12.76l69.13-35.21a132.273 132.273 0 0 0 57.79-57.81l35.1-68.88c12.56-24.64 17.01-52.58 12.91-79.91zM176 368c-17.67 0-32-14.33-32-32s14.33-32 32-32 32 14.33 32 32-14.33 32-32 32zm32-160c-17.67 0-32-14.33-32-32s14.33-32 32-32 32 14.33 32 32-14.33 32-32 32zm160 128c-17.67 0-32-14.33-32-32s14.33-32 32-32 32 14.33 32 32-14.33 32-32 32z"/></symbol>
        <symbol id="i-file" viewBox="0 0 384 512"><path d="M224 136V0H24C10.7 0 0 10.7 0 24v464c0 13.3 10.7 24 24 24h336c13.3 0 24-10.7 24-24V160H248c-13.2 0-24-10.8-24-24zm160-14.1v6.1H256V0h6.1c6.4 0 12.5 2.5 17 7l97.9 98c4.5 4.5 7 10.6 7 16.9z"/><path d="M60 330h70l30-70 50 130 40-60h70" fill="none" stroke="#f8f9fa" stroke-width="28"/></symbol>
        <symbol id="i-doc" viewBox="0 0 384 512"><path d="M224 136V0H24C10.7 0 0 10.7 0 24v464c0 13.3 10.7 24 24 24h336c13.3 0 24-10.7 24-24V160H248c-13.2 0-24-10.8-24-24zm160-14.1v6.1H256V0h6.1c6.4 0 12.5 2.5 17 7l97.9 98c4.5 4.5 7 10.6 7 16.9z"/><path d="M90 260h200M90 340h200M90 420h120" fill="none" stroke="#f8f9fa" stroke-width="36"/></symbol>
        <symbol id="i-list" viewBox="0 0 512 512"><circle cx="50" cy="96" r="44"/><circle cx="50" cy="256" r="44"/><circle cx="50" cy="416" r="44"/><rect x="160" y="72" width="352" height="48" rx="14"/><rect x="160" y="232" width="352" height="48" rx="14"/><rect x="160" y="392" width="352" height="48" rx="14"/></symbol>
        <symbol id="i-cols" viewBox="0 0 512 512"><path fill-rule="evenodd" d="M48 48h416a48 48 0 0 1 48 48v320a48 48 0 0 1-48 48H48a48 48 0 0 1-48-48V96a48 48 0 0 1 48-48zm16 112v240h160V160H64zm224 0v240h160V160H288z"/></symbol>
        <symbol id="i-team" viewBox="0 0 640 512"><circle cx="96" cy="120" r="62"/><circle cx="320" cy="130" r="90"/><circle cx="530" cy="120" r="62"/><path d="M0 352c0-70 40-110 96-110 28 0 50 8 66 22-40 30-62 72-66 118H20C8 382 0 372 0 352zM128 430c0-80 60-130 130-130h124c22 0 42 4 60 12-8 16-12 36-12 58 0 40 18 76 48 100H160c-18 0-32-16-32-40z"/><circle cx="530" cy="390" r="70" fill="none" stroke="currentColor" stroke-width="38"/><path d="M530 290v34M530 456v34M430 390h34M596 390h34M460 320l24 24M576 436l24 24M600 320l-24 24M484 436l-24 24" stroke="currentColor" stroke-width="30"/></symbol>
        <symbol id="i-building" viewBox="0 0 384 512"><path fill-rule="evenodd" d="M48 0h288a48 48 0 0 1 48 48v416a48 48 0 0 1-48 48H48a48 48 0 0 1-48-48V48A48 48 0 0 1 48 0zm0 48v416h80v-80h128v80h80V48H48z"/><path d="M96 96h64v64H96zM224 96h64v64h-64zM96 208h64v64H96zM224 208h64v64h-64z"/></symbol>
        <symbol id="i-medstack" viewBox="0 0 512 512"><path d="M112 0h240a56 56 0 0 1 48 27H120a72 72 0 0 0-72 72v280a56 56 0 0 1-27-48V91A91 91 0 0 1 112 0z"/><path fill-rule="evenodd" d="M152 64h280a72 72 0 0 1 72 72v304a72 72 0 0 1-72 72H152a72 72 0 0 1-72-72V136a72 72 0 0 1 72-72zm108 118v72h-72v60h72v72h64v-72h72v-60h-72v-72h-64z"/></symbol>
    </svg>

    <!-- sidebar -->
    <aside class="side-wrap d-flex">
        <div class="side-col">
            <div class="brand-box"><span class="brand-word">bumame</span></div>
            <div class="urgent-item d-flex align-items-center">
                <svg class="ic" width="16" height="16"><use href="#i-alert"/></svg>
                <span>Urgent Approval</span>
                <span class="urgent-count d-flex align-items-center justify-content-center">1</span>
            </div>
            <a class="side-item d-flex align-items-center" href="#"><span class="side-ico"><svg class="ic" width="16" height="16"><use href="#i-gauge"/></svg></span>Dashboard</a>
            <div class="side-head">Sales &amp; Projects</div>
            <a class="side-item d-flex align-items-center" href="#"><span class="side-ico"><svg class="ic" width="16" height="16"><use href="#i-plus"/></svg></span>New Project</a>
            <a class="side-item on d-flex align-items-center" href="#"><span class="side-ico"><svg class="ic" width="16" height="16"><use href="#i-list"/></svg></span>All Projects</a>
            <a class="side-item d-flex align-items-center" href="#"><span class="side-ico"><svg class="ic" width="16" height="16"><use href="#i-cols"/></svg></span>Kanban Board</a>
            <a class="side-item d-flex align-items-center" href="#"><span class="side-ico"><svg class="ic" width="20" height="16"><use href="#i-truck"/></svg></span>Vendors</a>
            <div class="side-head">Project Execution</div>
            <a class="side-item d-flex align-items-center" href="#"><span class="side-ico"><svg class="ic" width="20" height="16"><use href="#i-shake"/></svg></span>Technical Meeting</a>
            <a class="side-item d-flex align-items-center" href="#"><span class="side-ico"><svg class="ic" width="20" height="16"><use href="#i-box"/></svg></span>Inventory Request</a>
            <a class="side-item d-flex align-items-center" href="#"><span class="side-ico"><svg class="ic" width="12" height="16"><use href="#i-cliplist"/></svg></span>Inventory Dashboard</a>
            <a class="side-item d-flex align-items-center" href="#"><span class="side-ico"><svg class="ic" width="20" height="16"><use href="#i-team"/></svg></span>Staff Assignment</a>
            <div class="side-head">Medical Report</div>
            <a class="side-item d-flex align-items-center" href="#"><span class="side-ico"><svg class="ic" width="12" height="16"><use href="#i-file"/></svg></span>Result Entry</a>
        </div>
        <div class="side-rail">
            <div class="rail-up"></div>
            <div class="rail-thumb"></div>
            <div class="rail-down"></div>
        </div>
    </aside>

    <!-- project list behind the modal -->
    <main class="page-pane flex-grow-1 overflow-hidden">
        <div class="table-box">
            <table class="job-table">
                <colgroup><col style="width:295px"><col style="width:136px"><col style="width:189px"><col style="width:90px"><col style="width:316px"><col style="width:240px"><col style="width:167px"><col style="width:160px"></colgroup>
                <tr>
                    <td class="first"><span class="id-pill d-inline-flex align-items-center"><svg class="ic" width="11" height="13"><use href="#i-hash"/></svg>345</span>
                        <div class="job-name">PT Digital Operasi Indonesia</div>
                        <div class="job-sub d-flex align-items-center"><svg class="ic" width="10" height="12"><use href="#i-building"/></svg>PT Digital Operasi Indonesia</div></td>
                    <td class="ps-2"><span class="top-chip d-inline-flex align-items-center justify-content-center" style="width:76px"><svg class="ic" width="9" height="11"><use href="#i-hash"/></svg>OW-One</span></td>
                    <td class="ps-2"><div class="d-flex align-items-center gap-2"><span class="top-avatar d-block"></span><b class="small">Cheisi Luisyena</b></div></td>
                    <td class="ps-2"><span class="top-chip d-inline-flex align-items-center justify-content-center" style="width:35px">100</span></td>
                    <td class="ps-2 small text-secondary">10 Mar 2026</td>
                    <td><span class="state-pill state-manager d-flex align-items-center justify-content-center mx-auto">NEED APPROVAL MANAGER</span></td>
                    <td><span class="state-pill state-none d-flex align-items-center justify-content-center mx-auto">Not Selected</span></td>
                    <td><div class="d-flex justify-content-end gap-1 pe-3"><button class="act-btn"><svg class="ic" width="16" height="16"><use href="#i-eye"/></svg></button><button class="act-btn act-edit"><svg class="ic" width="15" height="15"><use href="#i-edit"/></svg></button></div></td>
                </tr>
                <tr>
                    <td class="first"><span class="id-pill d-inline-flex align-items-center"><svg class="ic" width="11" height="13"><use href="#i-hash"/></svg>346</span>
                        <div class="job-name">PT Solusi Integrasi</div>
                        <div class="job-sub d-flex align-items-center"><svg class="ic" width="10" height="12"><use href="#i-building"/></svg>PT Solusi Integrasi</div></td>
                    <td colspan="5"></td>
                    <td><span class="state-pill state-none d-flex align-items-center justify-content-center mx-auto">Not Selected</span></td>
                    <td><div class="d-flex justify-content-end gap-1 pe-3"><button class="act-btn"><svg class="ic" width="16" height="16"><use href="#i-eye"/></svg></button><button class="act-btn act-edit"><svg class="ic" width="15" height="15"><use href="#i-edit"/></svg></button></div></td>
                </tr>
                <tr>
                    <td class="first"><span class="id-pill d-inline-flex align-items-center"><svg class="ic" width="11" height="13"><use href="#i-hash"/></svg>123451</span>
                        <div class="job-name">Annual MCU PT Example</div>
                        <div class="job-sub d-flex align-items-center"><svg class="ic" width="10" height="12"><use href="#i-building"/></svg>PT Example Indonesia</div></td>
                    <td colspan="5"></td>
                    <td><span class="state-pill state-none d-flex align-items-center justify-content-center mx-auto">Not Selected</span></td>
                    <td><div class="d-flex justify-content-end gap-1 pe-3"><button class="act-btn"><svg class="ic" width="16" height="16"><use href="#i-eye"/></svg></button></div></td>
                </tr>
                <tr>
                    <td class="first"><span class="id-pill d-inline-flex align-items-center"><svg class="ic" width="11" height="13"><use href="#i-hash"/></svg>341</span>
                        <div class="job-name">MCU Tahunan ABC</div>
                        <div class="job-sub d-flex align-items-center"><svg class="ic" width="10" height="12"><use href="#i-building"/></svg>PT ABC</div></td>
                    <td colspan="5"></td>
                    <td><span class="state-pill state-none d-flex align-items-center justify-content-center mx-auto">Not Selected</span></td>
                    <td><div class="d-flex justify-content-end gap-1 pe-3"><button class="act-btn"><svg class="ic" width="16" height="16"><use href="#i-eye"/></svg></button><button class="act-btn act-edit"><svg class="ic" width="15" height="15"><use href="#i-edit"/></svg></button></div></td>
                </tr>
                <tr>
                    <td class="first"><span class="id-pill d-inline-flex align-items-center"><svg class="ic" width="11" height="13"><use href="#i-hash"/></svg>123</span>
                        <div class="job-name">PT ABC</div>
                        <div class="job-sub d-flex align-items-center"><svg class="ic" width="10" height="12"><use href="#i-building"/></svg>PT ABC</div></td>
                    <td colspan="5"></td>
                    <td><span class="state-pill state-none d-flex align-items-center justify-content-center mx-auto">Not Selected</span></td>
                    <td><div class="d-flex justify-content-end gap-1 pe-3"><button class="act-btn"><svg class="ic" width="16" height="16"><use href="#i-eye"/></svg></button><button class="act-btn act-stop"><svg class="ic" width="15" height="15"><use href="#i-ban"/></svg></button></div></td>
                </tr>
                <tr>
                    <td class="first"><span class="id-pill d-inline-flex align-items-center"><svg class="ic" width="11" height="13"><use href="#i-hash"/></svg>Steven-TESTING</span>
                        <div class="job-name">STEVEN-TESTING</div>
                        <div class="job-sub d-flex align-items-center"><svg class="ic" width="10" height="12"><use href="#i-building"/></svg>Steven TESTING</div></td>
                    <td colspan="5"></td>
                    <td><span class="state-pill state-vendor d-flex align-items-center justify-content-center mx-auto">Vendor Requested</span></td>
                    <td><div class="d-flex justify-content-end gap-1 pe-3"><button class="act-btn"><svg class="ic" width="16" height="16"><use href="#i-eye"/></svg></button><button class="act-btn act-stop"><svg class="ic" width="15" height="15"><use href="#i-ban"/></svg></button></div></td>
                </tr>
                <tr>
                    <td class="first"><span class="id-pill d-inline-flex align-items-center"><svg class="ic" width="11" height="13"><use href="#i-hash"/></svg>1234</span>
                        <div class="job-name">Steven - Test</div>
                        <div class="job-sub d-flex align-items-center"><svg class="ic" width="10" height="12"><use href="#i-building"/></svg>ChocoBanana</div></td>
                    <td colspan="5"></td>
                    <td><span class="state-pill state-none d-flex align-items-center justify-content-center mx-auto">Not Selected</span></td>
                    <td><div class="d-flex justify-content-end gap-1 pe-3"><button class="act-btn"><svg class="ic" width="16" height="16"><use href="#i-eye"/></svg></button></div></td>
                </tr>
                <tr>
                    <td class="first"><span class="id-pill d-inline-flex align-items-center"><svg class="ic" width="11" height="13"><use href="#i-hash"/></svg>PRJ-001</span>
                        <div class="job-name">Annual MCU PT Example</div>
                        <div class="job-sub d-flex align-items-center"><svg class="ic" width="10" height="12"><use href="#i-building"/></svg>PT Example Indonesia</div></td>
                    <td colspan="5"></td>
                    <td><span class="state-pill state-vendor d-flex align-items-center justify-content-center mx-auto">Vendor Requested</span></td>
                    <td><div class="d-flex justify-content-end gap-1 pe-3"><button class="act-btn"><svg class="ic" width="16" height="16"><use href="#i-eye"/></svg></button><button class="act-btn act-stop"><svg class="ic" width="15" height="15"><use href="#i-ban"/></svg></button></div></td>
                </tr>
                <tr>
                    <td class="first"><span class="id-pill d-inline-flex align-items-center"><svg class="ic" width="11" height="13"><use href="#i-hash"/></svg>357</span>
                        <div class="job-name">PT. Gobel Dharma</div>
                        <div class="job-sub d-flex align-items-center"><svg class="ic" width="10" height="12"><use href="#i-building"/></svg>PT. Gobel Dharma</div></td>
                    <td colspan="5"></td>
                    <td><span class="state-pill state-vendor d-flex align-items-center justify-content-center mx-auto">Vendor Requested</span></td>
                    <td><div class="d-flex justify-content-end gap-1 pe-3"><button class="act-btn"><svg class="ic" width="16" height="16"><use href="#i-eye"/></svg></button><button class="act-btn act-stop"><svg class="ic" width="15" height="15"><use href="#i-ban"/></svg></button></div></td>
                </tr>
            </table>
        </div>
    </main>

    <div class="modal-backdrop show"></div>

    <!-- project details modal -->
    <div class="modal d-block" tabindex="-1">
        <div class="modal-dialog detail-dialog">
            <div class="modal-content detail-content">
                <div class="modal-header detail-head">
                    <div class="detail-title d-flex align-items-center"><svg class="ic" width="20" height="20"><use href="#i-medstack"/></svg>Project Details</div>
                    <button type="button" class="btn-close btn-close-white" aria-label="Close"></button>
                </div>
                <div class="modal-body detail-body d-flex">
                    <div class="detail-main flex-grow-1">
                        <ul class="nav nav-tabs info-tabs">
                            <li class="nav-item"><a class="nav-link active d-flex align-items-center" href="#"><svg class="ic" width="16" height="16"><use href="#i-info"/></svg>Detail</a></li>
                            <li class="nav-item"><a class="nav-link d-flex align-items-center" href="#"><svg class="ic" width="20" height="17"><use href="#i-comments"/></svg>Chatter</a></li>
                            <li class="nav-item"><a class="nav-link d-flex align-items-center" href="#"><svg class="ic" width="18" height="16"><use href="#i-store"/></svg>Vendor</a></li>
                            <li class="nav-item"><a class="nav-link d-flex align-items-center" href="#"><svg class="ic" width="20" height="16"><use href="#i-friends"/></svg>Field Team</a></li>
                            <li class="nav-item"><a class="nav-link d-flex align-items-center" href="#"><svg class="ic" width="12" height="16"><use href="#i-clipcheck"/></svg>Results Team</a></li>
                            <li class="nav-item"><a class="nav-link d-flex align-items-center" href="#"><svg class="ic" width="20" height="16"><use href="#i-shake"/></svg>TM</a></li>
                            <li class="nav-item"><a class="nav-link d-flex align-items-center" href="#"><svg class="ic" width="18" height="16"><use href="#i-sign"/></svg>BA</a></li>
                            <li class="nav-item"><a class="nav-link d-flex align-items-center" href="#"><svg class="ic" width="16" height="16"><use href="#i-history"/></svg>History</a></li>
                        </ul>
                        <div class="row g-3 mt-0">
                            <div class="col-8 mt-3">
                                <div class="sheet sheet-left">
                                    <div class="sheet-head d-flex align-items-center"><svg class="ic" width="16" height="16"><use href="#i-info"/></svg>Project Information</div>
                                    <div class="field-row"><div class="field-label">Project Name</div><div class="field-value strong-val">Annual MCU PT Example</div></div>
                                    <div class="field-row"><div class="field-label">Company / Client</div><div class="field-value strong-val">PT Example Indonesia, PT Example Branch</div></div>
                                    <div class="field-row"><div class="field-label">SPH Number</div><div class="field-value strong-val blue-val">REF-123</div></div>
                                    <div class="field-row"><div class="field-label">Consumption</div><div class="field-value d-flex gap-2">
                                        <span class="chip d-flex align-items-center bg-success"><svg class="ic" width="10" height="12"><use href="#i-food"/></svg>Lunch: Ya</span>
                                        <span class="chip chip-snack d-flex align-items-center"><svg class="ic" width="12" height="12"><use href="#i-cookie"/></svg>Snack: Ya</span>
                                    </div></div>
                                    <div class="field-row tall"><div class="field-label">Date of MCU</div><div class="field-value d-flex"><span class="date-chip d-flex align-items-center"><svg class="ic" width="10" height="12"><use href="#i-cal"/></svg>09 - 11 Mar 2026</span></div></div>
                                    <div class="field-row tall"><div class="field-label">Location</div><div class="field-value d-flex align-items-center gap-2"><svg class="ic text-danger" width="12" height="16"><use href="#i-pin"/></svg>Jl. Sudirman No. 1, Jakarta</div></div>
                                    <div class="field-row"><div class="field-label">Participants</div><div class="field-value"><span class="pax-pill d-flex align-items-center justify-content-center">100 Pax</span></div></div>
                                    <div class="field-row"><div class="field-label">Sales Person</div><div class="field-value d-flex align-items-center"><span class="who-ico d-flex align-items-center justify-content-center"><svg class="ic" width="10" height="12"><use href="#i-tie"/></svg></span>Amalia Miladiati</div></div>
                                    <div class="field-row"><div class="field-label">Koordinator Lapangan</div><div class="field-value d-flex align-items-center"><span class="who-ico who-cyan d-flex align-items-center justify-content-center"><svg class="ic" width="14" height="12"><use href="#i-userclock"/></svg></span>Eka Wijaya</div></div>
                                    <div class="field-row"><div class="field-label">Koordinator Hasil</div><div class="field-value d-flex align-items-center"><span class="who-ico d-flex align-items-center justify-content-center"><svg class="ic" width="9" height="12"><use href="#i-doc"/></svg></span>ervan Artiadi</div></div>
                                    <div class="field-row"><div class="field-label">Notes</div><div class="note-box">VIP handling required</div></div>
                                </div>
                            </div>
                            <div class="col-4 mt-3">
                                <div class="sheet sheet-right">
                                    <div class="sheet-head d-flex align-items-center"><svg class="ic" width="16" height="16"><use href="#i-gear"/></svg>Preferences</div>
                                    <div class="sub-head">Facilities &amp; Consumption</div>
                                    <div class="pref-box pref-blue d-flex">
                                        <span class="pref-round round-blue d-flex align-items-center justify-content-center"><svg class="ic" width="15" height="16"><use href="#i-food"/></svg></span>
                                        <div><div class="pref-name">Lunch</div><div class="pref-state d-flex align-items-center"><svg class="ic" width="14" height="14"><use href="#i-check"/></svg>Requested</div></div>
                                    </div>
                                    <div class="pref-box pref-yellow d-flex">
                                        <span class="pref-round round-yellow d-flex align-items-center justify-content-center"><svg class="ic" width="16" height="16"><use href="#i-cookie"/></svg></span>
                                        <div><div class="pref-name">Snack</div><div class="pref-state d-flex align-items-center"><svg class="ic" width="14" height="14"><use href="#i-check"/></svg>Requested</div></div>
                                    </div>
                                    <div class="sub-head">Report Settings</div>
                                    <div class="set-row first d-flex justify-content-between"><span>Header/Footer</span><b>No</b></div>
                                    <div class="set-row d-flex justify-content-between"><span>Participant Photos</span><b>No</b></div>
                                    <div class="sub-head sub-docs">Documents</div>
                                    <div class="doc-link d-flex align-items-center justify-content-center"><svg class="ic" width="14" height="14"><use href="#i-extern"/></svg>Link SPH</div>
                                    <div class="doc-code d-flex align-items-center justify-content-center"><svg class="ic" width="13" height="14"><use href="#i-hash"/></svg><span>SPH: <b>REF-123</b></span></div>
                                </div>
                            </div>
                        </div>
                    </div>
                    <div class="modal-rail">
                        <div class="mr-up"></div>
                        <div class="mr-thumb"></div>
                        <div class="mr-down"></div>
                    </div>
                </div>
                <div class="modal-footer detail-foot">
                    <button type="button" class="close-pill">Close</button>
                </div>
            </div>
        </div>
    </div>

    <script src="https://cdn.jsdelivr.net/npm/bootstrap@5.3.0/dist/js/bootstrap.bundle.min.js"></script>
</body>
</html>
